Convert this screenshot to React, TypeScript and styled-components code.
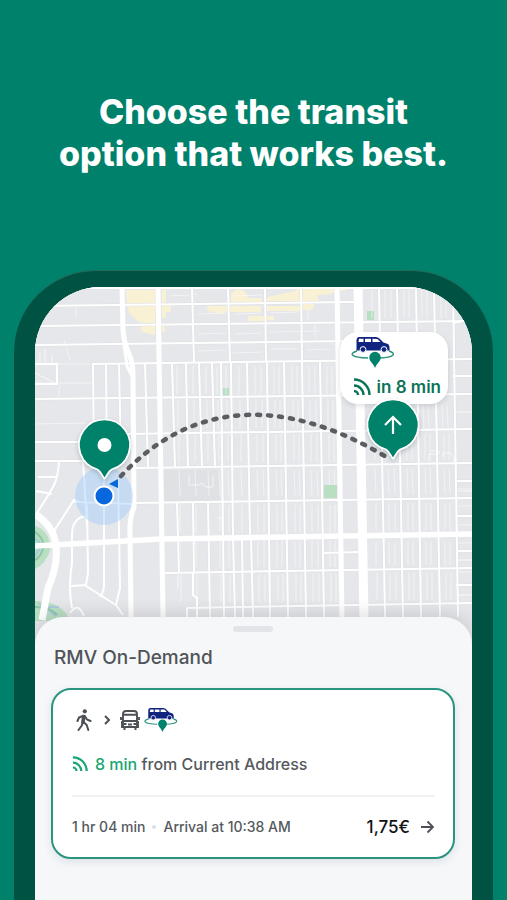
import React from 'react';
import styled, { createGlobalStyle } from 'styled-components';

const Global = createGlobalStyle`
  *, *::before, *::after { box-sizing: border-box; }
  html { height: 100%; }
  body {
    margin: 0;
    height: 100%;
    overflow: hidden;
    background: #00816b;
    font-family: Inter, 'Liberation Sans', sans-serif;
    font-optical-sizing: none;
  }
  #root { height: 100%; }
  h1, h2, p { margin: 0; }
`;

const Page = styled.main`
  height: 100%;
  display: flex;
  flex-direction: column;
  align-items: center;
`;

const Headline = styled.h1`
  padding: 91px 16px 95px;
  color: #ffffff;
  font-size: 34px;
  line-height: 42px;
  font-weight: 800;
  text-align: center;
`;

const Phone = styled.div`
  flex: 1;
  width: calc(100% - 28px);
  min-height: 0;
  display: flex;
  padding: 16px 21px 0;
  background: #005243;
  border-top: 1px solid #246b5c;
  border-radius: 82px 82px 0 0;
  overflow: hidden;
`;

const Screen = styled.div`
  flex: 1;
  min-width: 0;
  display: flex;
  flex-direction: column;
  background: #f5f6f8;
  border-radius: 66px 66px 0 0;
  overflow: hidden;
`;

const MapArea = styled.div`
  position: relative;
  flex: none;
  height: 356px;
  background: #e6e7ea;
`;

const MapSvg = styled.svg`
  display: block;
  width: 100%;
  height: 100%;
`;

const Callout = styled.div`
  position: absolute;
  top: 45px;
  right: 24px;
  display: flex;
  flex-direction: column;
  gap: 7px;
  padding: 5px 7px 5px 11px;
  background: #ffffff;
  border-radius: 18px;
  box-shadow: 0 2px 5px rgba(30, 40, 50, 0.14);
`;

const CalloutTime = styled.p`
  display: flex;
  align-items: center;
  gap: 6px;
  padding-left: 2px;
  color: #0b7358;
  font-size: 17px;
  line-height: 24px;
  font-weight: 600;
  white-space: nowrap;
`;

const PickupPin = styled.svg`
  position: absolute;
  top: 108px;
  right: 49px;
`;

const Sheet = styled.section`
  position: relative;
  flex: 1;
  margin-top: -26px;
  padding: 9px 17px 0 16px;
  background: #f5f7f9;
  border-radius: 28px 28px 0 0;
  box-shadow: 0 -4px 16px rgba(40, 45, 55, 0.14);
`;

const Handle = styled.div`
  width: 40px;
  height: 6px;
  margin: 0 auto;
  border-radius: 3px;
  background: #e3e4e7;
`;

const SheetTitle = styled.h2`
  padding: 12px 3px 0;
  color: #505458;
  font-size: 19px;
  line-height: 28px;
  font-weight: 500;
`;

const Card = styled.article`
  margin-top: 16px;
  padding: 17px 18px 18px 19px;
  background: #ffffff;
  border: 2px solid #2b9480;
  border-radius: 20px;
  box-shadow: 0 3px 8px rgba(30, 50, 80, 0.1);
`;

const Modes = styled.div`
  display: flex;
  align-items: center;
  height: 26px;
  padding-left: 4px;
  color: #4d5054;
`;

const ModeArrow = styled.svg`
  margin: 0 10px 0 12px;
`;

const LogoSlot = styled.span`
  display: flex;
  margin-left: 4px;
`;

const Departure = styled.p`
  display: flex;
  align-items: center;
  gap: 7px;
  margin-top: 19px;
  color: #55595d;
  font-size: 16px;
  line-height: 24px;
  font-weight: 500;
  white-space: nowrap;
`;

const Live = styled.span`
  display: inline-flex;
  color: #17a673;
`;

const Summary = styled.div`
  display: flex;
  align-items: center;
  margin-top: 19px;
  padding-top: 18px;
  border-top: 2px solid #f1f2f4;
  color: #55595d;
  font-size: 14px;
  line-height: 24px;
  font-weight: 500;
  white-space: nowrap;
`;

const Dot = styled.span`
  width: 4px;
  height: 4px;
  margin: 0 7px;
  border-radius: 50%;
  background: #dddfe2;
`;

const Price = styled.span`
  margin-left: auto;
  color: #101214;
  font-size: 17px;
  font-weight: 500;
`;

const OpenButton = styled.button`
  display: flex;
  margin-left: 10px;
  padding: 0;
  border: 0;
  background: none;
  color: #4d5054;
`;

type Line = number[];

/* Each street is x1, y1, x2, y2, width. */
const streets: Line[] = [
  [192, 287, 194, 363, 2], [228, 287, 230, 363, 2], [265, 287, 266, 361, 2], [301, 287, 302, 361, 2],
  [93, 363, 94, 461, 2], [106, 363, 107, 461, 2], [119, 363, 121, 461, 2], [145, 363, 148, 468, 2],
  [172, 363, 175, 468, 2], [186, 363, 188, 468, 2], [199, 363, 202, 468, 2], [212, 363, 215, 468, 2],
  [221, 363, 223, 536, 2], [231, 363, 233, 536, 2], [247, 363, 250, 536, 2],
  [267, 361, 270, 617, 2], [284, 361, 288, 617, 2], [302, 361, 306, 617, 2], [320, 361, 324, 617, 2],
  [379, 287, 385, 617, 2], [397, 287, 403, 617, 2], [416, 287, 421, 617, 2], [434, 287, 440, 617, 2],
  [453, 287, 458, 617, 2],
  [177, 503, 179, 573, 2], [193, 503, 194, 573, 2], [208, 503, 210, 617, 2], [223, 536, 224, 617, 2],
  [233, 536, 235, 617, 2], [242, 536, 243, 617, 2], [251, 536, 253, 617, 2],
  [35, 306, 350, 302, 2], [35, 326, 472, 321, 2], [35, 345, 350, 341, 2], [92, 364, 472, 359, 2],
  [35, 399, 472, 394, 2], [125, 434, 472, 429, 2], [35, 442, 85, 442, 2], [35, 461, 120, 461, 2],
  [135, 468, 472, 463, 2], [74, 502, 134, 504, 2], [134, 503, 472, 498, 2],
  [165, 573, 472, 568, 2], [187, 608, 472, 603, 2], [35, 373, 57, 384, 1],
  [324, 553, 360, 552, 2], [340, 302, 358, 302, 2],
  [453, 376, 472, 376, 2], [453, 394, 472, 394, 2], [453, 323, 472, 319, 2], [456, 481, 472, 481, 2],
  [456, 516, 472, 516, 2], [456, 551, 472, 551, 2], [456, 585, 472, 585, 2],
  [456, 412, 472, 412, 1], [458, 491, 472, 491, 1], [458, 560, 472, 560, 1], [458, 595, 472, 595, 1],
];

const avenues: Line[] = [
  [158, 287, 163, 617, 5], [337, 287, 342, 617, 5], [358, 287, 364, 617, 9],
];

/* Alleys are drawn in the blocks between two cross streets. */
const alleys: Line[] = [
  ...[177, 193, 206, 217, 226, 239, 255, 261, 274, 279, 292, 297, 309, 315, 327, 332].flatMap((x): Line[] => [
    [x, 366, x, 394, 1], [x + 1, 400, x + 1, 428, 1], [x + 2, 434, x + 2, 462, 1], [x + 2, 470, x + 3, 496, 1],
    [x + 3, 505, x + 3, 532, 1], [x + 3, 541, x + 3, 567, 1], [x + 4, 574, x + 4, 602, 1],
  ]),
  ...[373, 386, 392, 405, 410, 423, 428, 442, 447].flatMap((x): Line[] => [
    [x - 1, 290, x - 1, 318, 1], [x, 405, x + 1, 428, 1], [x + 2, 434, x + 2, 460, 1], [x + 2, 468, x + 3, 494, 1],
    [x + 3, 503, x + 3, 530, 1], [x + 3, 542, x + 3, 565, 1], [x + 4, 573, x + 4, 600, 1],
  ]),
  [235, 296, 262, 295, 1], [197, 294, 190, 294, 1], [170, 296, 189, 295, 1], [235, 314, 262, 313, 1],
  [235, 334, 262, 333, 1], [232, 353, 262, 352, 1], [270, 313, 298, 312, 1], [270, 332, 320, 331, 1],
  [270, 349, 298, 349, 1], [306, 350, 330, 349, 1], [198, 334, 226, 333, 1], [198, 351, 226, 350, 1],
  [197, 314, 226, 313, 1], [35, 383, 92, 383, 1], [35, 424, 86, 423, 1], [40, 364, 90, 364, 1],
  [64, 340, 70, 360, 1], [76, 307, 76, 316, 1], [60, 385, 58, 399, 1], [315, 325, 315, 338, 1], [308, 307, 308, 320, 1],
  [456, 489, 472, 489, 1], [457, 506, 472, 506, 1], [457, 525, 472, 525, 1], [457, 543, 472, 543, 1], [457, 572, 472, 572, 1],
];

const Streets = ({ lines, color, extra = 0 }: { lines: Line[]; color: string; extra?: number }) => (
  <g stroke={color}>
    {lines.map(([x1, y1, x2, y2, w], i) => (
      <line key={i} x1={x1} y1={y1} x2={x2} y2={y2} strokeWidth={w + extra} />
    ))}
  </g>
);

const PinShape = () => (
  <path
    d="M0 33.500C-2.500 31.500-3 27-7 24.500A25.500 25.500 0 1 1 7 24.500C3 27 2.500 31.500 0 33.500Z"
    fill="#00816b"
    stroke="#ffffff"
    strokeWidth="1.700"
    strokeLinejoin="round"
    filter="url(#pinShadow)"
  />
);

const CityMap = () => (
  <MapSvg viewBox="35 287 437 356" preserveAspectRatio="xMidYMin slice" role="img" aria-label="Map with route to pickup">
    <defs>
      <filter id="pinShadow" x="-30%" y="-30%" width="160%" height="160%">
        <feDropShadow dx="0" dy="2" stdDeviation="2" floodColor="#203040" floodOpacity="0.25" />
      </filter>
    </defs>
    <rect x="35" y="287" width="437" height="356" fill="#e6e7ea" />
    <rect x="164" y="470" width="56" height="32" fill="#e0e1e4" />

    <g fill="#f9f1d4">
      <path d="M126 290H155V335L142 332L140 327L151 324L139 322L130 314L127 306Z" />
      <path d="M162 290h4v14h5v8h-5v6h-4zM162 326h3v6h-3z" />
      <path d="M231 294l6-5 8 2 3 7h14v5h-31zM207 306h54v6H224l-2 2-14-3zM248 316h14v5h-14z" />
      <path d="M267 297l24-5 10-4h33v4l-3 2-13 1v6h-51zM267 306h33v5h-33zM303 304h12l-3 6h-9zM250 316h14v5h-14zM267 316h7v4h-7zM340 288h9l-4 3h-5z" />
    </g>
    <g fill="#b9dfc3">
      <path d="M222 388h7v8h-7zM367 311h7v9h-7z" />
      <path d="M35 526q11 3 14 14l1 10q-4 14-15 19zM35 601q19-1 31 12l3 8H35z" />
    </g>
    <g fill="none" stroke="#8fc7a5" strokeWidth="2">
      <path d="M35 532q10 7 8 16t-8 12M35 607q15 0 22 8" />
    </g>
    <g fill="none" stroke="#a6c4e4" strokeWidth="1.500">
      <path d="M35 539q7 3 5 9l-5 8M38 603l18 13M46 607l13 0" />
    </g>

    <g opacity="0.5"><Streets lines={alleys} color="#ffffff" /></g>
    <Streets lines={streets} color="#dfe0e3" extra={1} />
    <Streets lines={streets} color="#ffffff" />
    <path d="M324 485h13v13h-13z" fill="#b9dfc3" />
    <g fill="none" stroke="#ffffff" strokeWidth="2">
      <path d="M59 462q-1 15-5 23T37 513M38 477h18M36 491l16 3M54 531l20-31 6 2M83 461l4 65M72 608q-4-20 0-45V535q0-17 14-19" />
      <path d="M87 505l1 68-2 12-15 1M104 478V585q0 7-4 12M118 478l2 110-4 17-30-19M116 605l7 10M70 613q8-12 14 3" />
      <path d="M193 573v22l4 3v19M187 608v9M35 364h22v20H35" />
    </g>
    <g fill="none" stroke="#ffffff" opacity="0.7">
      <path d="M189 475v10h9l4-2 4 4h7v-12M429 462v-8h10v-3h-9M443 457v-4h8l3 4v8M178 573v16M218 518h4v12M40 352v11M45 349v13M52 355v8" />
    </g>
    <Streets lines={avenues} color="#ffffff" />
    <g fill="none" stroke="#ffffff">
      <path d="M122 287L123 331Q124 343 129 354Q133 362 133 375L134 507Q129 520 130 534L131 617" strokeWidth="5" />
      <path d="M124 345L127 366L132 376" strokeWidth="3" />
      <path d="M35 546L161 539L472 534" strokeWidth="5.500" />
      <path d="M35 514Q54 526 56 546T48 588L42 620" strokeWidth="7" />
      <path d="M35 288h437" strokeWidth="2" />
    </g>

    <circle cx="104" cy="496" r="29" fill="#9ccbfa" opacity="0.42" />
    <path d="M121 476C190 402 282 394 388 458" fill="none" stroke="#5c5d60" strokeWidth="4.500" strokeLinecap="round" strokeDasharray="3 8" />
    <path d="M109 484L118 479V488Z" fill="#0867dd" />
    <circle cx="104" cy="496" r="9.500" fill="#0867dd" stroke="#ffffff" strokeWidth="2" />
    <g transform="translate(104.500 445)">
      <PinShape />
      <circle r="7" fill="#ffffff" />
    </g>
  </MapSvg>
);

const OnDemandLogo = ({ width }: { width: number }) => (
  <svg width={width} height={Math.round((width * 31) / 44)} viewBox="0 0 44 31" aria-hidden="true">
    <path d="M6 14C-2 16.500-1 20.500 17 21M38 14C46 16.500 43 20.500 29 21" fill="none" stroke="#2b957f" strokeWidth="1.500" />
    <path
      fillRule="evenodd"
      fill="#10237f"
      d="M8 0H25Q27.500 0 29.500 2.500L32.500 5.500L37 7Q39 8.500 38.500 13.500H5.500V3Q6 0 8 0ZM8 1.800L7.500 5H12.500V1.800ZM14 1.800V5H20V1.800ZM21.500 1.800V5H29.500L26.500 2Z"
    />
    <g fill="#10237f" stroke="#ffffff"><circle cx="12" cy="12.500" r="2.900" /><circle cx="33" cy="12.500" r="2.900" /></g>
    <path d="M24 31C22.500 26.500 18.300 24.500 18.300 20.500A5.700 5.700 0 0 1 29.700 20.500C29.700 24.500 25.500 26.500 24 31Z" fill="#00816b" />
  </svg>
);

const LiveIcon = ({ size }: { size: number }) => (
  <svg width={size} height={size} viewBox="0 0 18 18" fill="none" stroke="currentColor" strokeWidth="2.400" aria-hidden="true">
    <path d="M1 1.500A15.500 15.500 0 0 1 16.500 17M1 7.500A9.500 9.500 0 0 1 10.500 17" />
    <path d="M1 13A4 4 0 0 1 5 17" />
  </svg>
);

const WalkIcon = () => (
  <svg width="16" height="22" viewBox="0 0 16 22" fill="none" stroke="currentColor" strokeLinecap="round" strokeLinejoin="round" role="img" aria-label="Walk">
    <circle cx="8.800" cy="2.300" r="2.100" fill="currentColor" stroke="none" />
    <path d="M7.800 7.500L7 12.500" strokeWidth="3.600" />
    <path d="M7.500 6.700L3 8.500L1.500 12M8.800 7L10.800 10.300L14.500 12M6.500 13L5.800 16.500L2.500 21M7.500 13L10.700 16L12.300 21" strokeWidth="2" />
  </svg>
);

const BusIcon = () => (
  <svg width="20" height="20" viewBox="0 0 20 20" fill="none" stroke="currentColor" strokeWidth="1.900" role="img" aria-label="Bus">
    <path d="M3 17V4Q3 1 6 1H14Q17 1 17 4V17ZM3 4.800H17M2 11H18M1 7V10M19 7V10M2 11V17H18V11" />
    <path d="M4 14H6.500M13.500 14H16M8 14.500H12M4.500 17V20M15.500 17V20" strokeWidth="2" />
  </svg>
);

export default function App() {
  return (
    <>
      <Global />
      <Page>
        <Headline>Choose the transit<br />option that works best.</Headline>
        <Phone>
          <Screen>
            <MapArea>
              <CityMap />
              <Callout>
                <OnDemandLogo width={44} />
                <CalloutTime><LiveIcon size={18} />in 8 min</CalloutTime>
              </Callout>
              <PickupPin width="60" height="72" viewBox="-30 -30 60 72" role="img" aria-label="Pickup point">
                <PinShape />
                <path d="M0 9V-8M-8 0L0 -8L8 0" fill="none" stroke="#ffffff" strokeWidth="2.200" />
              </PickupPin>
            </MapArea>
            <Sheet>
              <Handle />
              <SheetTitle>RMV On-Demand</SheetTitle>
              <Card>
                <Modes>
                  <WalkIcon />
                  <ModeArrow width="6" height="10" viewBox="0 0 6 10" fill="none" stroke="currentColor" strokeWidth="2" aria-hidden="true">
                    <path d="M1 1L5 5L1 9" />
                  </ModeArrow>
                  <BusIcon />
                  <LogoSlot><OnDemandLogo width={34} /></LogoSlot>
                </Modes>
                <Departure>
                  <Live><LiveIcon size={16} /></Live>
                  <span><Live>8 min</Live> from Current Address</span>
                </Departure>
                <Summary>
                  <span>1 hr 04 min</span>
                  <Dot />
                  <span>Arrival at 10:38 AM</span>
                  <Price>1,75€</Price>
                  <OpenButton aria-label="Open trip details">
                    <svg width="15" height="14" viewBox="0 0 15 14" fill="none" stroke="currentColor" strokeWidth="1.800" aria-hidden="true">
                      <path d="M1 7H13M7.500 1.500L13 7L7.500 12.500" />
                    </svg>
                  </OpenButton>
                </Summary>
              </Card>
            </Sheet>
          </Screen>
        </Phone>
      </Page>
    </>
  );
}
